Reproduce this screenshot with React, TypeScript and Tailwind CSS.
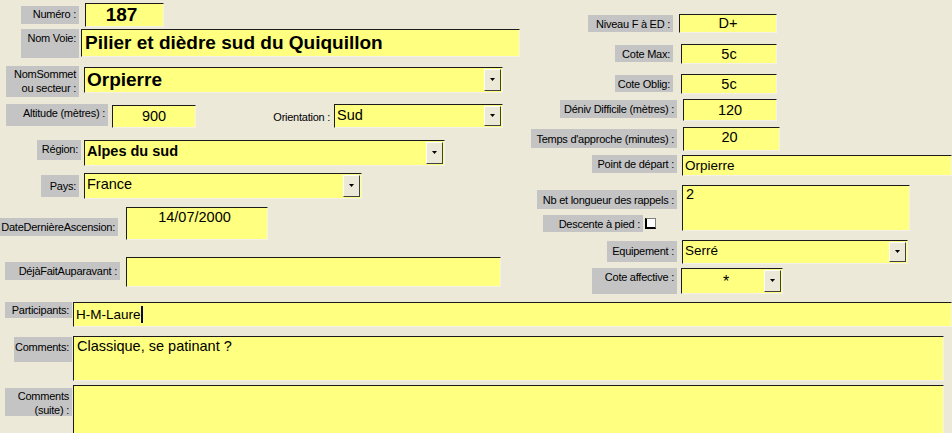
import React from 'react';

// petits composants façon formulaire Access
const Label = ({ className = '', children }: { className?: string; children: React.ReactNode }) => (
  <div className={`shrink-0 bg-[#c4c4c4] text-right pr-[3px] pt-[1px] text-[11px] leading-[14px] tracking-[-0.25px] whitespace-nowrap text-black ${className}`}>
    {children}
  </div>
);

const Field = ({ className = '', children }: { className?: string; children?: React.ReactNode }) => (
  <div className={`shrink-0 bg-[#ffff80] border-t border-l border-[#1c1c1c] border-r-[#f4f2e8] border-b-[#f4f2e8] border-r border-b overflow-hidden whitespace-nowrap text-black ${className}`}>
    {children}
  </div>
);

const DropButton = () => (
  <div className="ml-auto shrink-0 w-[17px] h-full bg-[#ece9d8] border-t border-l border-white border-r border-b border-r-[#404040] border-b-[#404040] flex items-center justify-center">
    <svg width="7" height="4" viewBox="0 0 7 4">
      <path d="M1 0h5L3.5 3z" fill="#000" />
    </svg>
  </div>
);

const Combo = ({ className = '', textClass = '', children }: { className?: string; textClass?: string; children: React.ReactNode }) => (
  <Field className={`flex items-stretch pr-[1px] py-[1px] ${className}`}>
    <div className={`flex-1 pl-[2px] ${textClass}`}>{children}</div>
    <DropButton />
  </Field>
);

export default function App() {
  return (
    <div className="w-[952px] h-[433px] overflow-hidden bg-[#ece9d8] font-['Liberation_Sans',Arial,sans-serif]">
      <div className="flex items-start h-[294px]">
        {/* colonne gauche */}
        <div className="w-[531px] shrink-0 flex flex-col">
          <div className="flex items-start mt-[3px] h-[24px]">
            <Label className="ml-[21px] w-[58px] h-[18px] mt-[3px]">Numéro :</Label>
            <Field className="ml-[6px] w-[79px] h-[24px] text-[19px] leading-[22px] font-bold text-center pr-[6px]">187</Field>
          </div>
          <div className="flex items-start mt-[2px] h-[29px]">
            <Label className="ml-[21px] w-[58px] h-[29px] pt-[2px]">Nom Voie:</Label>
            <Field className="ml-[2px] w-[439px] h-[28px] text-[19px] leading-[26px] font-bold pl-[3px]">Pilier et dièdre sud du Quiquillon</Field>
          </div>
          <div className="flex items-start mt-[8px] h-[31px]">
            <Label className="ml-[6px] w-[73px] h-[31px] pt-[1px] leading-[13px]">
              NomSommet
              <br />
              ou secteur :
            </Label>
            <Combo className="ml-[5px] w-[419px] h-[26px] mt-[1px]" textClass="text-[19px] leading-[22px] font-bold">Orpierre</Combo>
          </div>
          <div className="flex items-start mt-[7px] h-[24px]">
            <Label className="ml-[6px] w-[102px] h-[22px] pt-[2px]">Altitude (mètres) :</Label>
            <Field className="ml-[4px] w-[84px] h-[23px] mt-[1px] text-[14.5px] leading-[21px] text-center">900</Field>
            <div className="ml-[66px] w-[68px] text-right text-[11px] leading-[14px] tracking-[-0.25px] whitespace-nowrap mt-[6px] text-black">Orientation :</div>
            <Combo className="ml-[4px] w-[169px] h-[24px]" textClass="text-[14.5px] leading-[18px]">Sud</Combo>
          </div>
          <div className="flex items-start mt-[12px] h-[26px]">
            <Label className="ml-[37px] w-[44px] h-[20px] pt-[2px]">Région:</Label>
            <Combo className="ml-[3px] w-[361px] h-[26px]" textClass="text-[14.5px] leading-[18px] font-bold">Alpes du sud</Combo>
          </div>
          <div className="flex items-start mt-[7px] h-[26px]">
            <Label className="ml-[41px] w-[38px] h-[22px] mt-[2px] pt-[4px]">Pays:</Label>
            <Combo className="ml-[5px] w-[278px] h-[26px]" textClass="text-[14.5px] leading-[18px]">France</Combo>
          </div>
          <div className="flex items-start mt-[8px] h-[33px]">
            <Label className="ml-0 w-[118px] h-[18px] mt-[11px] pt-[2px]">DateDernièreAscension:</Label>
            <Field className="ml-[8px] w-[142px] h-[33px] text-[14.5px] leading-[18px] text-center pr-[5px]">14/07/2000</Field>
          </div>
          <div className="flex items-start mt-[17px] h-[30px]">
            <Label className="ml-[5px] w-[115px] h-[18px] mt-[5px] pt-[2px]">DéjàFaitAuparavant :</Label>
            <Field className="ml-[6px] w-[375px] h-[30px]" />
          </div>
        </div>

        {/* colonne droite */}
        <div className="flex-1 flex flex-col">
          <div className="flex items-start mt-[14px] h-[19px]">
            <Label className="ml-[57px] w-[85px] h-[17px] mt-[1px] pt-[2px]">Niveau F à ED :</Label>
            <Field className="ml-[6px] w-[98px] h-[19px] text-[14.5px] leading-[17px] text-center">D+</Field>
          </div>
          <div className="flex items-start mt-[11px] h-[20px]">
            <Label className="ml-[84px] w-[58px] h-[17px] mt-[1px] pt-[2px]">Cote Max:</Label>
            <Field className="ml-[8px] w-[96px] h-[20px] text-[14.5px] leading-[18px] text-center">5c</Field>
          </div>
          <div className="flex items-start mt-[10px] h-[20px]">
            <Label className="ml-[84px] w-[58px] h-[17px] mt-[1px] pt-[2px]">Cote Oblig:</Label>
            <Field className="ml-[8px] w-[96px] h-[20px] text-[14.5px] leading-[18px] text-center">5c</Field>
          </div>
          <div className="flex items-start mt-[5px] h-[22px]">
            <Label className="ml-[29px] w-[117px] h-[18px] mt-[1px] pt-[2px]">Déniv Difficile (mètres) :</Label>
            <Field className="ml-[6px] w-[94px] h-[22px] text-[14.5px] leading-[20px] text-center">120</Field>
          </div>
          <div className="flex items-start mt-[6px] h-[24px]">
            <Label className="ml-0 w-[146px] h-[19px] mt-[2px] pt-[3px]">Temps d'approche (minutes) :</Label>
            <Field className="ml-[6px] w-[97px] h-[24px] text-[14.5px] leading-[18px] text-center pr-[4px]">20</Field>
          </div>
          <div className="flex items-start mt-[4px] h-[21px]">
            <Label className="ml-[61px] w-[85px] h-[18px] pt-[2px]">Point de départ :</Label>
            <Field className="ml-[5px] w-[270px] h-[21px] text-[13.5px] leading-[19px] pl-[2px]">Orpierre</Field>
          </div>
          <div className="flex items-start mt-[9px] h-[46px]">
            <div className="w-[151px] shrink-0 flex flex-col">
              <Label className="ml-[6px] w-[140px] h-[19px] mt-[5px] pt-[3px]">Nb et longueur des rappels :</Label>
              <div className="flex items-center mt-[6px]">
                <Label className="ml-[12px] w-[100px] h-[17px] pt-[2px]">Descente à pied :</Label>
                <div className="ml-[2px] w-[11px] h-[11px] bg-white border border-[#808080] border-l-2 border-b-2 border-l-black border-b-black" />
              </div>
            </div>
            <Field className="w-[228px] h-[46px] text-[14.5px] leading-[17px] pl-[3px]">2</Field>
          </div>
          <div className="flex items-start mt-[9px] h-[24px]">
            <Label className="ml-[76px] w-[70px] h-[21px] mt-[1px] pt-[3px]">Equipement :</Label>
            <Combo className="ml-[5px] w-[226px] h-[24px]" textClass="text-[13.5px] leading-[18px]">Serré</Combo>
          </div>
          <div className="flex items-start mt-[4px] h-[26px]">
            <Label className="ml-[61px] w-[85px] h-[26px] pt-[2px]">Cote affective :</Label>
            <Combo className="ml-[4px] w-[102px] h-[26px]" textClass="text-[16px] leading-[24px] text-center pl-[6px]">*</Combo>
          </div>
        </div>
      </div>

      {/* bas du formulaire */}
      <div className="flex items-start mt-[8px] h-[25px]">
        <Label className="ml-[5px] w-[67px] h-[16px] pt-[1px]">Participants:</Label>
        <Field className="ml-[1px] flex-1 h-[25px] text-[13.5px] leading-[20px] pl-[2px] flex items-center">
          <span>H-M-Laure</span>
          <span className="w-[2px] h-[17px] bg-[#0a0a40]" />
        </Field>
      </div>
      <div className="flex items-start mt-[9px] h-[45px]">
        <Label className="ml-[14px] w-[58px] h-[25px] mt-[1px] pt-[3px]">Comments:</Label>
        <Field className="ml-[1px] w-[871px] h-[45px] text-[14.5px] leading-[17px] pl-[3px] pt-[1px]">Classique, se patinant ?</Field>
      </div>
      <div className="flex items-start mt-[4px] h-[50px]">
        <Label className="ml-[5px] w-[67px] h-[28px] mt-[3px] pt-0 leading-[13px]">
          Comments
          <br />
          (suite) :
        </Label>
        <Field className="ml-[1px] w-[871px] h-[50px]" />
      </div>
    </div>
  );
}
